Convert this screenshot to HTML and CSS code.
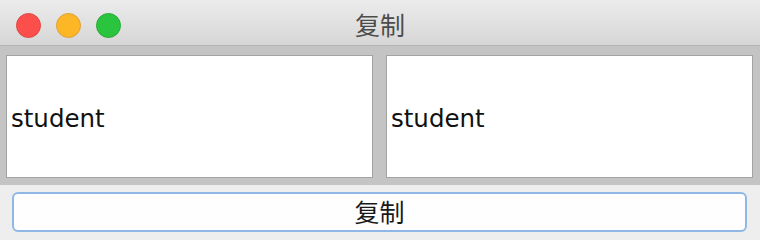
FILE: index.html
```html
<!DOCTYPE html>
<html lang="zh">
<head>
<meta charset="utf-8">
<title>复制</title>
<link rel="stylesheet" href="styles.css">
</head>
<body>
<div class="window">
  <div class="titlebar">
    <div class="lights">
      <span class="light red"></span>
      <span class="light yellow"></span>
      <span class="light green"></span>
    </div>
    <div class="title">复制</div>
    <div class="spacer"></div>
  </div>
  <div class="content">
    <div class="field">student</div>
    <div class="field">student</div>
  </div>
  <div class="footer">
    <button class="btn">复制</button>
  </div>
</div>
</body>
</html>
```

FILE: styles.css
```css
html, body {
  margin: 0;
  padding: 0;
  background: #ececec;
}
body {
  width: 760px;
  height: 240px;
  overflow: hidden;
  font-family: "DejaVu Sans", "Noto Sans CJK SC", sans-serif;
}
.window {
  width: 760px;
  height: 240px;
  background: #efefef;
  border-radius: 6px 6px 0 0;
  overflow: hidden;
  display: flex;
  flex-direction: column;
}
.titlebar {
  flex: none;
  height: 46px;
  box-sizing: border-box;
  padding-top: 6px;
  display: grid;
  grid-template-columns: 1fr auto 1fr;
  align-items: center;
  background: linear-gradient(#ececec, #d6d6d6);
  border-bottom: 1px solid #b3b3b3;
}
.lights {
  display: flex;
  gap: 15px;
  padding-left: 16px;
}
.light {
  width: 25px;
  height: 25px;
  border-radius: 50%;
  box-sizing: border-box;
}
.red { background: #fc4f4c; border: 1px solid #df4744; }
.yellow { background: #fdb726; border: 1px solid #de9f34; }
.green { background: #2ac43e; border: 1px solid #27aa35; }
.title {
  font-family: "Noto Sans CJK SC", sans-serif;
  font-size: 25px;
  color: #4c4c4c;
  line-height: 1;
  padding-bottom: 2px;
}
.content {
  flex: none;
  height: 139px;
  box-sizing: border-box;
  background: #c4c4c4;
  padding: 9px 7px 7px 6px;
  display: grid;
  grid-template-columns: 1fr 1fr;
  gap: 13px;
}
.field {
  background: #ffffff;
  border: 1px solid #a3a3a3;
  display: flex;
  align-items: center;
  padding-left: 4px;
  padding-top: 3px;
  font-family: "DejaVu Sans", sans-serif;
  font-size: 24.5px;
  color: #111111;
}
.footer {
  flex: 1;
  padding: 7px 13px 0 12px;
  background: #eeeeee;
}
.btn {
  display: block;
  width: 100%;
  height: 40px;
  box-sizing: border-box;
  border: 2px solid #8fb8e6;
  border-radius: 6px;
  background: #fefefe;
  font-family: "Noto Sans CJK SC", sans-serif;
  font-size: 25px;
  color: #1a1a1a;
  line-height: 1;
  padding: 0 0 2px 0;
  margin: 0;
}
```
